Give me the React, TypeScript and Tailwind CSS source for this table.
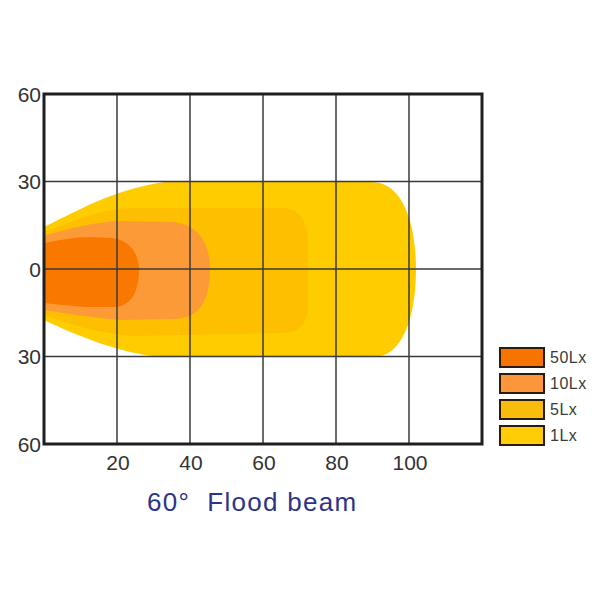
import React from "react";

type Level = { label: string; fill: string };

const levels: Level[] = [
  { label: "50Lx", fill: "bg-[#f77400]" },
  { label: "10Lx", fill: "bg-[#fb963a]" },
  { label: "5Lx", fill: "bg-[#f8bc0c]" },
  { label: "1Lx", fill: "bg-[#ffcc05]" },
];

// plot frame in page coordinates (svg viewBox is offset to match)
const L = 44;
const R = 482;
const T = 94;
const B = 444;
const xs = [117, 190, 263, 336, 409];
const ys = [181.5, 269, 356.5];

function BeamChart() {
  const yLabels: [number, string][] = [
    [T, "60"],
    [181.5, "30"],
    [269, "0"],
    [356.5, "30"],
    [B, "60"],
  ];
  const xLabels: [number, string][] = [
    [117, "20"],
    [190, "40"],
    [263, "60"],
    [336, "80"],
    [409, "100"],
  ];

  return (
    <svg width={490} height={400} viewBox="0 80 490 400" className="shrink-0">
      {/* 1Lx */}
      <path
        d="M44,227 C72,214 112,189 165,182 L372,182 C402,182 416,222 416,269 C416,318 402,357 374,357 L160,357 C120,353 80,337 44,320 Z"
        fill="#ffcc00"
      />
      {/* 5Lx */}
      <path
        d="M44,232 C70,222 100,209 132,208 L282,208 C300,208 308,222 308,242 L308,303 C308,324 300,333 282,333 L132,336 C100,333 70,325 44,315 Z"
        fill="#fdbf00"
      />
      {/* 10Lx */}
      <path
        d="M44,236 C70,228 95,222 120,221 L172,222 C200,224 210,245 210,269 C210,300 200,318 175,319 L120,320 C95,318 70,314 44,310 Z"
        fill="#fd9a38"
      />
      {/* 50Lx */}
      <path
        d="M44,243 C60,240 75,237 90,237 L112,238 C130,240 139,254 139,270 C139,290 132,306 115,307 L85,307 C70,306 55,304 44,303 Z"
        fill="#f97800"
      />

      {xs.map((x) => (
        <line key={x} x1={x} y1={T} x2={x} y2={B} stroke="#3a3a3a" strokeWidth={1.5} />
      ))}
      {ys.map((y) => (
        <line key={y} x1={L} y1={y} x2={R} y2={y} stroke="#3a3a3a" strokeWidth={1.5} />
      ))}
      <rect x={L} y={T} width={R - L} height={B - T} fill="none" stroke="#1f1f1f" strokeWidth={3} />

      {yLabels.map(([y, t], i) => (
        <text
          key={i}
          x={41}
          y={y + 7.5}
          textAnchor="end"
          fontFamily="'Liberation Sans', Arial, sans-serif"
          fontSize={21}
          fill="#333"
        >
          {t}
        </text>
      ))}
      {xLabels.map(([x, t]) => (
        <text
          key={t}
          x={x + 1}
          y={470}
          textAnchor="middle"
          fontFamily="'Liberation Sans', Arial, sans-serif"
          fontSize={21}
          fill="#333"
        >
          {t}
        </text>
      ))}
    </svg>
  );
}

function Legend() {
  return (
    <div className="ml-[9px] mt-[267px] flex flex-col gap-[5px]">
      {levels.map((lv) => (
        <div key={lv.label} className="flex h-[21px] items-center">
          <div className={`h-[21px] w-[46px] border-2 border-[#2a1b0c] ${lv.fill}`} />
          <span className="ml-[5px] text-[16px] leading-none tracking-[0.5px] text-[#3a3a3a]">{lv.label}</span>
        </div>
      ))}
    </div>
  );
}

export default function App() {
  return (
    <div
      className="flex h-[600px] w-[600px] flex-col bg-white pt-[80px]"
      style={{ fontFamily: "'Liberation Sans', Arial, sans-serif" }}
    >
      <div className="flex">
        <BeamChart />
        <Legend />
      </div>
      <div className="mt-[7px] pl-[147px] text-[26px] leading-[30px] tracking-[1.3px] text-[#2e3388]">
        60°&nbsp;&nbsp;Flood beam
      </div>
    </div>
  );
}
